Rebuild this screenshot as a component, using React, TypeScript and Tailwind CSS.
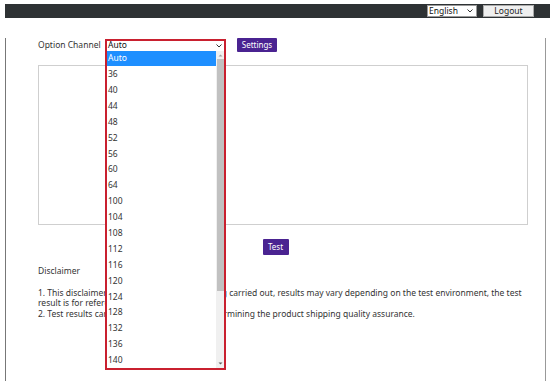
import React from "react";

const items = ["Auto","36","40","44","48","52","56","60","64","100","104","108","112","116","120","124","128","132","136","140"];

function Chevron({ className = "" }: { className?: string }) {
  return (
    <svg width="6" height="4" viewBox="0 0 6 4" className={className}>
      <path d="M0.5 0.5 L3 3 L5.5 0.5" fill="none" stroke="#333" strokeWidth="1" />
    </svg>
  );
}

export default function App() {
  return (
    <div className="w-[550px] h-[381px] bg-white pt-[4px] pl-[5px] overflow-hidden text-[#333]" style={{ fontFamily: '"Noto Sans", "Open Sans", sans-serif' }}>
      {/* top bar */}
      <div className="h-[14px] bg-[#2e3234] flex items-center justify-end pr-[16px] gap-[6px]">
        <div className="w-[50px] h-[12px] bg-white border border-[#999] flex items-center justify-between pl-[1px] pr-[3px] text-[8.5px] leading-none text-[#111]">
          <span>English</span>
          <Chevron />
        </div>
        <div className="w-[51px] h-[12px] bg-[#efefef] border border-[#aaa] flex items-center justify-center text-[8.5px] leading-none text-[#222]">
          Logout
        </div>
      </div>
      {/* frame */}
      <div className="w-[541px] h-[359px] border-l-[1.5px] border-r-[1.5px] border-b-2 border-l-[#777] border-r-[#999] border-b-[#c4c4c4]">
        <div className="pl-[32px]">
          <div className="mt-[20px] h-[14px] flex items-center">
            <span className="w-[67px] text-[8.5px] leading-none">Option Channel</span>
            <div className="relative w-[121px] h-[11px]">
              <div className="absolute left-0 -top-[1px] w-[121px] border-2 border-[#c9202f] bg-white z-10">
                <div className="h-[10px] flex items-center justify-between pl-[1px] pr-[2px] text-[8.5px] leading-none text-[#111]">
                  <span>Auto</span>
                  <Chevron />
                </div>
                <div className="flex">
                  <div className="flex-1">
                    {items.map((it, i) => (
                      <div
                        key={it}
                        className={
                          i === 0
                            ? "h-[15.9px] flex items-center pl-[1px] text-[8.5px] leading-none bg-[#1e8fff] text-white"
                            : "h-[15.9px] flex items-center pl-[1px] text-[8.5px] leading-none text-[#333]"
                        }
                      >
                        {it}
                      </div>
                    ))}
                  </div>
                  <div className="w-[8px] bg-[#f0f0f0] flex flex-col items-center">
                    <svg width="5" height="5" viewBox="0 0 5 5" className="mt-[2px]">
                      <path d="M0.5 3.5 L2.5 1.5 L4.5 3.5 Z" fill="#a0a0a0" />
                    </svg>
                    <div className="w-[7px] h-[232px] bg-[#c1c1c1] mt-[1px]" />
                    <div className="flex-1" />
                    <svg width="5" height="5" viewBox="0 0 5 5" className="mb-[2px]">
                      <path d="M0.5 1.5 L2.5 3.5 L4.5 1.5 Z" fill="#606060" />
                    </svg>
                  </div>
                </div>
              </div>
            </div>
            <div className="ml-[11px] w-[40px] h-[14px] bg-[#4a2391] rounded-[1px] text-white text-[8px] leading-none flex items-center justify-center">
              Settings
            </div>
          </div>
          <div className="mt-[13px] w-[490px] h-[160px] border border-[#cfcfcf]" />
        </div>
        <div className="mt-[14px] flex justify-center">
          <div className="w-[26px] h-[16px] bg-[#4a2391] rounded-[1px] text-white text-[8px] leading-none flex items-center justify-center">
            Test
          </div>
        </div>
        <div className="pl-[32px] text-[8.5px] leading-[10.5px] text-[#333]">
          <div className="mt-[11px]">Disclaimer</div>
          <div className="mt-[11px]">
            1. This disclaimer applies to all of the test being carried out, results may vary depending on the test environment, the test
            <br />
            result is for reference only.
            <br />
            2. Test results cannot be used as basis for determining the product shipping quality assurance.
          </div>
        </div>
      </div>
    </div>
  );
}
